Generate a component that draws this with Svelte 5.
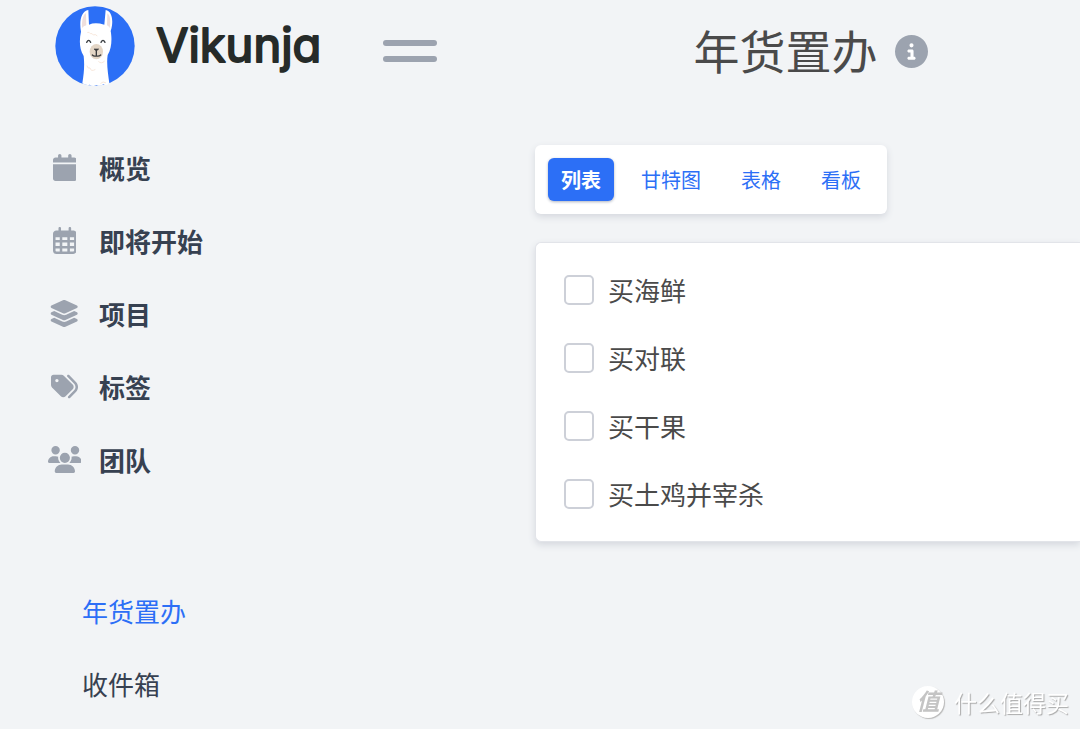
<script lang="ts">
  interface NavItem {
    title: string;
    width: number;
    icon: string;
  }

  interface Task {
    id: number;
    title: string;
    done: boolean;
  }

  const navItems: NavItem[] = [
    {
      title: '概览',
      width: 448,
      icon: 'M96 32V64H48C21.5 64 0 85.5 0 112v48H448V112c0-26.5-21.5-48-48-48H352V32c0-17.7-14.3-32-32-32s-32 14.3-32 32V64H160V32c0-17.7-14.3-32-32-32S96 14.3 96 32zM448 192H0V464c0 26.5 21.5 48 48 48H400c26.5 0 48-21.5 48-48V192z',
    },
    {
      title: '即将开始',
      width: 448,
      icon: 'M152 24c0-13.3-10.7-24-24-24s-24 10.7-24 24V64H64C28.7 64 0 92.7 0 128v16 48V448c0 35.3 28.7 64 64 64H384c35.3 0 64-28.7 64-64V192 144 128c0-35.3-28.7-64-64-64H344V24c0-13.3-10.7-24-24-24s-24 10.7-24 24V64H152V24zM48 192h80v56H48V192zm0 104h80v64H48V296zm128 0h96v64H176V296zm144 0h80v64H320V296zm80-48H320V192h80v56zm0 160v40c0 8.8-7.2 16-16 16H320V408h80zm-128 0v56H176V408h96zm-144 0v56H64c-8.8 0-16-7.2-16-16V408h80zM272 248H176V192h96v56z',
    },
    {
      title: '项目',
      width: 576,
      icon: 'M264.5 5.2c14.9-6.9 32.1-6.9 47 0l218.6 101c8.5 3.9 13.9 12.4 13.9 21.8s-5.4 17.9-13.9 21.8l-218.6 101c-14.9 6.9-32.1 6.9-47 0L45.9 149.8C37.4 145.8 32 137.3 32 128s5.4-17.9 13.9-21.8L264.5 5.2zM476.9 209.6l53.2 24.6c8.5 3.9 13.9 12.4 13.9 21.8s-5.4 17.9-13.9 21.8l-218.6 101c-14.9 6.9-32.1 6.9-47 0L45.9 277.8C37.4 273.8 32 265.3 32 256s5.4-17.9 13.9-21.8l53.2-24.6 152 70.2c23.4 10.8 50.4 10.8 73.8 0l152-70.2zm-152 198.2l152-70.2 53.2 24.6c8.5 3.9 13.9 12.4 13.9 21.8s-5.4 17.9-13.9 21.8l-218.6 101c-14.9 6.9-32.1 6.9-47 0L45.9 405.8C37.4 401.8 32 393.3 32 384s5.4-17.9 13.9-21.8l53.2-24.6 152 70.2c23.4 10.8 50.4 10.8 73.8 0z',
    },
    {
      title: '标签',
      width: 512,
      icon: 'M345 39.1L472.8 168.4c52.4 53 52.4 138.2 0 191.2L360.8 472.9c-9.3 9.4-24.5 9.5-33.9 .2s-9.5-24.5-.2-33.9L438.6 325.9c33.9-34.3 33.9-89.4 0-123.7L310.9 72.9c-9.3-9.4-9.2-24.6 .2-33.9s24.6-9.2 33.9 .2zM0 229.5V80C0 53.5 21.5 32 48 32H197.5c17 0 33.3 6.7 45.3 18.7l168 168c25 25 25 65.5 0 90.5L277.3 442.7c-25 25-65.5 25-90.5 0l-168-168C6.7 262.7 0 246.5 0 229.5zM144 144a32 32 0 1 0 -64 0 32 32 0 1 0 64 0z',
    },
    {
      title: '团队',
      width: 640,
      icon: 'M144 0a80 80 0 1 1 0 160A80 80 0 1 1 144 0zM512 0a80 80 0 1 1 0 160A80 80 0 1 1 512 0zM0 298.7C0 239.8 47.8 192 106.7 192h42.7c15.9 0 31 3.5 44.6 9.7c-1.3 7.2-1.9 14.7-1.9 22.3c0 38.2 16.8 72.5 43.3 96c-.2 0-.4 0-.7 0H21.3C9.6 320 0 310.4 0 298.7zM405.3 320c-.2 0-.4 0-.7 0c26.6-23.5 43.3-57.8 43.3-96c0-7.6-.7-15-1.9-22.3c13.6-6.3 28.7-9.7 44.6-9.7h42.7C592.2 192 640 239.8 640 298.7c0 11.8-9.6 21.3-21.3 21.3H405.3zM224 224a96 96 0 1 1 192 0 96 96 0 1 1 -192 0zM128 485.3C128 411.7 187.7 352 261.3 352H378.7C452.3 352 512 411.7 512 485.3c0 14.7-11.9 26.7-26.7 26.7H154.7c-14.7 0-26.7-11.9-26.7-26.7z',
    },
  ];

  const projects = ['年货置办', '收件箱'];
  const views = ['列表', '甘特图', '表格', '看板'];

  let currentProject = $state('年货置办');
  let currentView = $state('列表');
  let menuActive = $state(true);
  let tasks: Task[] = $state([
    { id: 1, title: '买海鲜', done: false },
    { id: 2, title: '买对联', done: false },
    { id: 3, title: '买干果', done: false },
    { id: 4, title: '买土鸡并宰杀', done: false },
  ]);
</script>

<div class="app">
  <header class="navbar">
    <div class="navbar-start">
      <a class="logo" href="#home">
        <svg class="llama" viewBox="45 18 240 240" aria-hidden="true">
          <circle cx="165" cy="138" r="119" fill="#2c6ff6" />
          <path d="M123 95C117 62 124 34 145 30L147 74Q165 66 193 74L197 30C216 32 222 64 212 93C216 113 216 145 203 165C199 190 204 220 208 250Q199 258 190 253Q180 261 170 255Q158 261 149 254Q138 258 127 250C132 220 134 195 131 168C117 145 118 118 123 95Z" fill="#fff" />
          <path d="M126 84C125 60 130 43 138 40L139 76Q131 78 126 84ZM201 76L202 40C211 46 213 65 209 84Q206 78 201 76Z" fill="#eedfdd" />
          <path d="M143 97Q148 95 151 101Q157 99 160 105Q166 101 171 107M141 198Q143 207 150 204Q153 216 165 209M176 185Q184 193 193 184M182 250Q189 242 197 248" fill="none" stroke="#f8e8dc" stroke-width="3" stroke-linecap="round" />
          <ellipse cx="169" cy="155" rx="20" ry="23" fill="#e4d6c6" />
          <path d="M140 127Q146 115 152 127M183 127Q189 115 195 127" fill="none" stroke="#3c4044" stroke-width="4" stroke-linecap="round" />
          <path d="M162 147H176L169 153Z" fill="#3c3c3e" stroke="#3c3c3e" stroke-width="2" stroke-linejoin="round" />
          <path d="M169 152V167M157 165Q161 170 169 168Q177 170 182 165" fill="none" stroke="#3c3c3e" stroke-width="4" stroke-linecap="round" />
        </svg>
        <svg class="wordmark" viewBox="0 0 170 80">
          <text x="1" y="56">Vikunja</text>
        </svg>
      </a>
      <button class="menu-button" aria-label="菜单" aria-expanded={menuActive} onclick={() => (menuActive = !menuActive)}>
        <span></span>
        <span></span>
      </button>
    </div>
    <div class="project-title">
      <h1>{currentProject}</h1>
      <a class="info" href="#info" aria-label="信息">
        <svg viewBox="0 0 512 512">
          <circle cx="256" cy="256" r="240" fill="#fff" />
          <path d="M256 512A256 256 0 1 0 256 0a256 256 0 1 0 0 512zM216 336h24V272H216c-13.3 0-24-10.7-24-24s10.7-24 24-24h48c13.3 0 24 10.7 24 24v88h8c13.3 0 24 10.7 24 24s-10.7 24-24 24H216c-13.3 0-24-10.7-24-24s10.7-24 24-24zm40-208a32 32 0 1 1 0 64 32 32 0 1 1 0-64z" fill="currentColor" />
        </svg>
      </a>
    </div>
  </header>

  <div class="content">
    <aside class="sidebar">
      {#if menuActive}
        <nav class="main-menu">
          {#each navItems as item (item.title)}
            <a href="#{item.title}">
              <span class="icon">
                <svg viewBox="0 0 {item.width} 512" aria-hidden="true"><path d={item.icon} /></svg>
              </span>
              {item.title}
            </a>
          {/each}
        </nav>
        <nav class="project-menu">
          {#each projects as project (project)}
            <a href="#{project}" class:active={project === currentProject} onclick={() => (currentProject = project)}>{project}</a>
          {/each}
        </nav>
      {/if}
    </aside>

    <main>
      <div class="switch-view">
        {#each views as view (view)}
          <button class:active={view === currentView} onclick={() => (currentView = view)}>{view}</button>
        {/each}
      </div>

      <ul class="tasks">
        {#each tasks as task (task.id)}
          <li>
            <label class:done={task.done}>
              <input type="checkbox" bind:checked={task.done} />
              {task.title}
            </label>
          </li>
        {/each}
      </ul>
    </main>
  </div>

  <div class="watermark">
    <span class="badge">值</span>
    <span>什么值得买</span>
  </div>
</div>

<style>
  :global(body) {
    background: #f2f4f6;
  }

  .app {
    --primary: #2c6ff6;
    --grey-400: #9ca3af;
    --grey-700: #374151;
    --sidebar-width: 535px;
    min-height: 100vh;
    overflow: hidden;
    color: #4a4a4a;
    font-family: 'Noto Sans CJK SC', sans-serif;
    font-size: 26px;
    line-height: 38px;
  }

  a {
    color: inherit;
    text-decoration: none;
  }

  button {
    border: 0;
    background: none;
    font: inherit;
    cursor: pointer;
  }

  svg {
    display: block;
  }

  .navbar,
  .content {
    display: grid;
    grid-template-columns: var(--sidebar-width) 1fr;
  }

  .navbar {
    padding-top: 6px;
    height: 90px;
  }

  .navbar-start {
    display: flex;
    align-items: center;
    gap: 58px;
    padding-left: 55px;
  }

  .logo {
    display: flex;
    align-self: flex-start;
    gap: 20px;
  }

  .llama {
    width: 80px;
    height: 80px;
  }

  .wordmark {
    width: 170px;
    height: 80px;
    fill: #262b29;
    stroke: #262b29;
    stroke-width: 2px;
    stroke-linejoin: round;
    font-family: Inter, sans-serif;
    font-size: 47px;
    font-weight: 400;
    font-feature-settings: 'cv11';
  }

  .menu-button {
    display: flex;
    flex-direction: column;
    gap: 10px;
    width: 54px;
    padding: 0;
  }

  .menu-button span {
    height: 6px;
    border-radius: 3px;
    background: var(--grey-400);
  }

  .project-title {
    display: flex;
    align-items: center;
    justify-content: center;
    gap: 17px;
    padding-left: 6px;
  }

  h1 {
    margin: 0;
    padding-bottom: 4px;
    font-size: 46px;
    font-weight: 400;
    line-height: 60px;
  }

  .info {
    color: var(--grey-400);
  }

  .info svg {
    width: 33px;
    height: 33px;
  }

  .main-menu,
  .project-menu {
    display: flex;
    flex-direction: column;
    color: var(--grey-700);
    line-height: 73px;
  }

  .main-menu {
    padding: 35px 0 0 45px;
    font-weight: 700;
  }

  .main-menu a {
    display: flex;
    align-items: center;
    gap: 15px;
  }

  .icon {
    display: flex;
    justify-content: center;
    width: 39px;
    color: var(--grey-400);
  }

  .icon svg {
    height: 27px;
    fill: currentColor;
  }

  .project-menu {
    padding: 78px 0 0 82px;
  }

  .project-menu .active {
    color: var(--primary);
  }

  main {
    display: flex;
    flex-direction: column;
    align-items: flex-start;
    gap: 28px;
    padding-top: 49px;
  }

  .switch-view {
    display: flex;
    gap: 14px;
    padding: 13px;
    border-radius: 6px;
    background: #fff;
    box-shadow: 0 3px 7px #d5d8de;
  }

  .switch-view button {
    padding: 0 13px;
    border-radius: 6px;
    color: var(--primary);
    font-size: 20px;
    line-height: 43px;
  }

  .switch-view .active {
    background: var(--primary);
    box-shadow: 0 1px 3px #aeb4c0;
    color: #fff;
    font-weight: 700;
  }

  .tasks {
    align-self: stretch;
    margin: 0;
    padding: 13px 28px;
    border: 1px solid #e2e4e9;
    border-right: 0;
    border-radius: 6px 0 0 6px;
    background: #fff;
    box-shadow: 0 3px 7px #d5d8de;
    list-style: none;
  }

  .tasks label {
    display: flex;
    align-items: center;
    gap: 14px;
    height: 68px;
  }

  .tasks .done {
    text-decoration: line-through;
  }

  .tasks input {
    appearance: none;
    box-sizing: border-box;
    width: 30px;
    height: 30px;
    margin: 0;
    border: 2px solid #cdd0d8;
    border-radius: 5px;
    background: #fff;
  }

  .tasks input:checked {
    border-color: var(--primary);
    background: var(--primary);
  }

  .watermark {
    position: fixed;
    right: 11px;
    bottom: 10px;
    display: flex;
    align-items: center;
    gap: 10px;
    color: #fff;
    font-size: 23px;
    line-height: 34px;
    text-shadow: 1px 1px 1px #a8a8a8;
  }

  .badge {
    width: 32px;
    height: 32px;
    border-radius: 50%;
    background: #fff;
    box-shadow: 1px 1px 1px #b8b8b8;
    color: #c4c4c4;
    font-style: italic;
    font-weight: 700;
    line-height: 28px;
    text-align: center;
    text-shadow: none;
  }
</style>
